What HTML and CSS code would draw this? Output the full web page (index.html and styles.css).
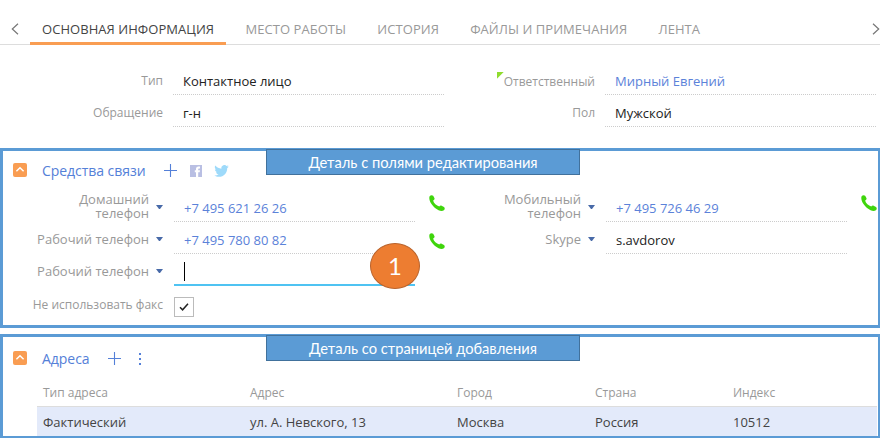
FILE: index.html
```html
<!DOCTYPE html>
<html lang="ru">
<head>
<meta charset="utf-8">
<title>Контакт</title>
<link rel="stylesheet" href="styles.css">
</head>
<body>
<svg class="defs" width="0" height="0">
  <symbol id="phone" viewBox="0 0 16 16"><path d="M0.6 1.2C1.6-.2 3.4-.1 4.2.8L5.5 3.2C5.8 4.2 5 5 4.1 5.5C4.7 8 7.5 10.7 10.3 11.6C10.8 10.8 11.7 10.3 12.6 10.7L15 12.1C16.1 12.9 15.9 14.4 14.9 15.2C12.8 16.7 9.5 15.7 6.4 13.3C2.7 10.3-.8 5.2.6 1.2Z"/></symbol>
  <symbol id="up" viewBox="0 0 14 14"><path d="M3.4 8.3L7 4.8l3.6 3.5" fill="none" stroke="#fff" stroke-width="1.5"/></symbol>
  <symbol id="plus" viewBox="0 0 13 13"><path d="M6.5 0v13M0 6.5h13" fill="none" stroke="#5480d8" stroke-width="1.1"/></symbol>
</svg>
<nav class="tabs">
  <svg class="arrow" viewBox="0 0 8 12"><path d="M7 .7L1.300 6L7 11.3"/></svg>
  <span class="tab active">ОСНОВНАЯ ИНФОРМАЦИЯ</span>
  <span class="tab">МЕСТО РАБОТЫ</span>
  <span class="tab">ИСТОРИЯ</span>
  <span class="tab">ФАЙЛЫ И ПРИМЕЧАНИЯ</span>
  <span class="tab">ЛЕНТА</span>
  <svg class="arrow right" viewBox="0 0 8 12"><path d="M1 .7L6.700 6L1 11.3"/></svg>
</nav>
<section class="profile">
  <div class="field"><label>Тип</label><div class="value">Контактное лицо</div></div>
  <div class="field"><label class="low"><i class="mark"></i>Ответственный</label><div class="value link">Мирный Евгений</div></div>
  <div class="field"><label>Обращение</label><div class="value">г-н</div></div>
  <div class="field"><label>Пол</label><div class="value">Мужской</div></div>
</section>
<section class="panel contacts">
  <div class="banner">Деталь с полями редактирования</div>
  <header>
    <svg class="toggle"><use href="#up"/></svg>
    <h2>Средства связи</h2>
    <svg class="plus"><use href="#plus"/></svg>
    <svg class="fb" viewBox="0 0 12 12"><path fill="#b9bfe3" d="M0 0h12v12H0z"/><path fill="#fff" d="M6 12V7.3H4.800V5.3H6V4C6 2.400 6.900 1.500 8.400 1.500H10v1.900H9c-.6 0-.8.3-.8.8v1.100H10l-.3 2H8.200V12z"/></svg>
    <svg class="tw" viewBox="0 0 24 20"><path fill="#9edafa" d="M24 2.400c-.9.4-1.800.7-2.800.8 1-.6 1.800-1.600 2.200-2.700-1 .6-2 1-3.100 1.200A4.900 4.900 0 0 0 11.900 6.200C7.800 6 4.200 4.100 1.700 1A4.900 4.900 0 0 0 3.200 7.600C2.400 7.500 1.600 7.300 1 7c0 2.300 1.600 4.400 3.900 4.900-.7.2-1.500.2-2.200.1.600 2 2.400 3.400 4.600 3.400A9.900 9.900 0 0 1 0 17.500C2.200 18.900 4.800 19.700 7.500 19.700c9.100 0 14.300-7.700 14-14.600 1-.7 1.800-1.600 2.500-2.700z"/></svg>
  </header>
  <div class="rows">
    <div class="field"><label class="double"><span>Домашний</span><span>телефон</span></label><i class="caret"></i><div class="value link">+7 495 621 26 26</div><svg class="phone"><use href="#phone"/></svg></div>
    <div class="field"><label class="double"><span>Мобильный</span><span>телефон</span></label><i class="caret"></i><div class="value link">+7 495 726 46 29</div><svg class="phone"><use href="#phone"/></svg></div>
    <div class="field"><label>Рабочий телефон</label><i class="caret"></i><div class="value link">+7 495 780 80 82</div><svg class="phone second"><use href="#phone"/></svg></div>
    <div class="field"><label>Skype</label><i class="caret"></i><div class="value">s.avdorov</div></div>
    <div class="field"><label>Рабочий телефон</label><i class="caret"></i><div class="value editing"><i class="cursor"></i></div></div>
    <div></div>
    <div class="field fax"><label>Не использовать факс</label><span class="check"><svg viewBox="0 0 10 8"><path d="M1 4.200L3.600 6.800L9 .8"/></svg></span></div>
  </div>
  <div class="step">1</div>
</section>
<section class="panel addresses">
  <div class="banner">Деталь со страницей добавления</div>
  <header>
    <svg class="toggle"><use href="#up"/></svg>
    <h2>Адреса</h2>
    <svg class="plus"><use href="#plus"/></svg>
    <svg class="dots" viewBox="0 0 2 12"><path d="M0 0h2v2H0zM0 5h2v2H0zM0 10h2v2H0z"/></svg>
  </header>
  <div class="grid head"><span>Тип адреса</span><span>Адрес</span><span>Город</span><span>Страна</span><span>Индекс</span></div>
  <div class="grid body"><span>Фактический</span><span>ул. А. Невского, 13</span><span>Москва</span><span>Россия</span><span>10512</span></div>
</section>
</body>
</html>
```
FILE: styles.css
```css
* { box-sizing: border-box; }
body {
  margin: 0;
  width: 880px;
  height: 438px;
  overflow: hidden;
  background: #fff;
  color: #222;
  font: 13px/18px "Open Sans", sans-serif;
}
svg { display: block; flex: none; }
.defs { position: absolute; }
.tabs {
  display: flex;
  height: 45px;
  padding-left: 11px;
  border-bottom: 1px solid #ddd;
  white-space: nowrap;
}
.arrow { width: 8px; height: 12px; margin: 23px 11px 0 0; fill: none; stroke: #777; stroke-width: 1.2; }
.arrow.right { margin: 23px 0 0 auto; }
.tab { height: 45px; padding-top: 20px; color: #999; margin-right: 31.2px; letter-spacing: 0.05px; }
.tab.active { width: 196px; padding-left: 12px; margin-right: 19.5px; color: #444; border-bottom: 3px solid #f99d52; }
.profile { display: grid; grid-template-columns: 432px 432px; padding-top: 18px; height: 103px; align-content: start; }
.field { display: flex; height: 32px; }
.field > * { flex: none; }
.field label { width: 163px; padding-top: 8px; text-align: right; color: #999; white-space: nowrap; }
.profile .field label { padding-top: 9px; font-size: 12px; }
.mark { display: inline-block; width: 7px; height: 7px; vertical-align: 7px; background: #8fdc2e; clip-path: polygon(0 0, 100% 0, 0 100%); }
.value {
  width: 272px;
  height: 32px;
  margin-left: 10px;
  padding: 9px 0 0 10px;
  background: repeating-linear-gradient(90deg, #ccc 0 1px, #fff 1px 2px) left bottom / 100% 1px no-repeat;
  white-space: nowrap;
}
.link { color: #5b82d9; }
.panel { position: relative; border: 3px solid #5b9bd5; border-right-width: 2px; }
.contacts { height: 180px; }
.addresses { height: 104px; margin-top: 6px; border-bottom-width: 2px; }
.banner {
  position: absolute;
  left: 263px;
  top: -2px;
  width: 314px;
  height: 26px;
  border: 1px solid #41719c;
  background: #5b9bd5;
  color: #fff;
  font: 14.7px/24px Lato, sans-serif;
  text-align: center;
  white-space: nowrap;
}
.panel header { display: flex; height: 39px; padding-left: 10px; }
.toggle { width: 14px; height: 14px; margin-top: 12px; border-radius: 2px; background: #f99d52; }
h2 { margin: 10px 0 0 15px; font: 14px/20px "Open Sans", sans-serif; letter-spacing: -0.05px; color: #5480d8; white-space: nowrap; }
.plus { width: 13px; height: 13px; margin: 13px 0 0 18px; }
.fb { width: 12px; height: 12px; margin: 14px 0 0 13px; }
.tw { width: 15px; height: 12px; margin: 14px 0 0 12px; }
.dots { width: 2px; height: 12px; margin: 14px 0 0 18px; fill: #5480d8; }
.addresses header { padding-top: 2px; }
.rows { display: grid; grid-template-columns: 432px 432px; }
.rows .field label { width: 146px; padding-top: 8px; }
.rows .field label.double { display: flex; flex-direction: column; padding-top: 2px; line-height: 14px; }
.caret { width: 7px; height: 4px; margin: 15px 0 0 7px; background: #486aa8; clip-path: polygon(0 0, 100% 0, 57% 100%, 43% 100%); }
.rows .value { width: 241px; margin-left: 11px; }
.phone { width: 16px; height: 16px; margin: 5px 0 0 14px; fill: #3fd50c; }
.phone.second { margin-top: 11px; }
.rows .value.editing { background: linear-gradient(#4fc3f2, #4fc3f2) left bottom / 100% 2px no-repeat; padding-top: 8px; }
.cursor { display: block; width: 1px; height: 19px; background: #000; }
.rows .field.fax label { width: 160px; padding-top: 10px; font-size: 12px; }
.check { display: flex; align-items: center; justify-content: center; width: 20px; height: 20px; margin: 11px 0 0 11px; border: 1px solid #bbb; }
.check svg { width: 10px; height: 8px; fill: none; stroke: #222; stroke-width: 1.5; }
.step {
  position: absolute;
  left: 367px;
  top: 92px;
  width: 50px;
  height: 46px;
  border: 1px solid #b9632c;
  border-radius: 50%;
  background: #ed7d31;
  color: #fff;
  font: 24px/44px Lato, sans-serif;
  text-align: center;
}
.grid { display: grid; grid-template-columns: 207px 207px 138px 138px 1fr; margin-left: 34px; padding-left: 6px; white-space: nowrap; }
.head { height: 30px; padding-top: 8px; color: #999; font-size: 12px; }
.body { height: 30px; margin-right: 1px; padding-top: 6px; border-top: 1px solid #ddd; background: #e3eafa; color: #444; }
```
